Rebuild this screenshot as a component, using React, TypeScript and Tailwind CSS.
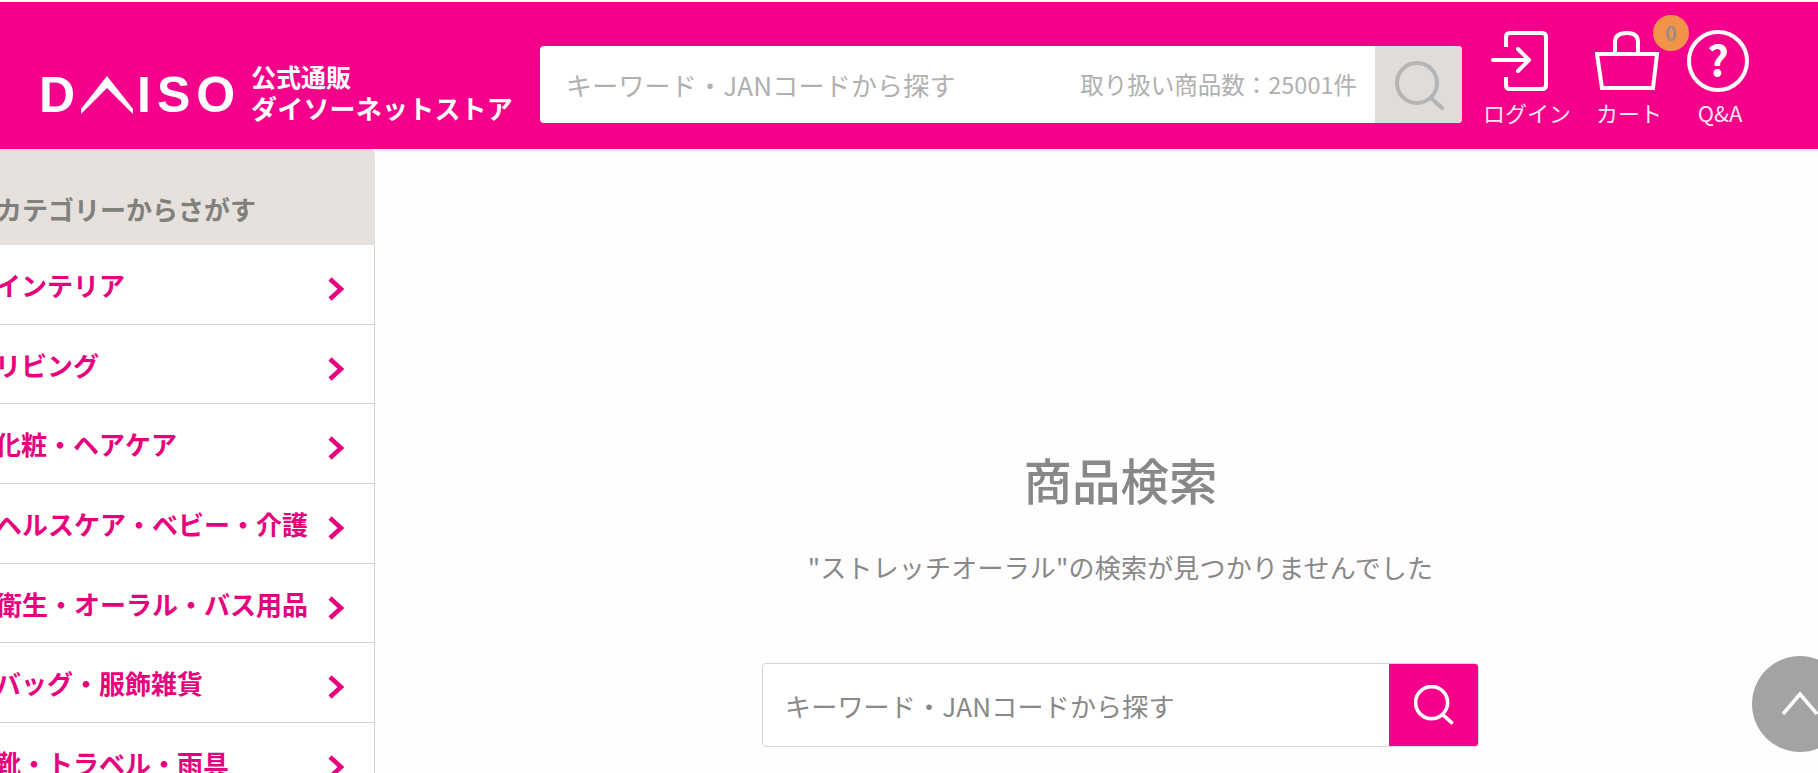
const font = { fontFamily: '"Noto Sans CJK JP", "Noto Sans", sans-serif' };

const cats = [
  { t: 'インテリア', ml: '-ml-[5px]' },
  { t: 'リビング', ml: '-ml-[5px]' },
  { t: '化粧・ヘアケア', ml: '-ml-[5px]' },
  { t: 'ヘルスケア・ベビー・介護', ml: '-ml-[4px]' },
  { t: '衛生・オーラル・バス用品', ml: '-ml-[4px]' },
  { t: 'バッグ・服飾雑貨', ml: '-ml-[5px]' },
  { t: '靴・トラベル・雨具', ml: '-ml-[5px]' },
];

function SearchIcon({ className, color, w = 4 }: { className: string; color: string; w?: number }) {
  return (
    <svg viewBox="0 0 50 50" className={className} fill="none" stroke={color} strokeWidth={w} strokeLinecap="round">
      <circle cx="22" cy="22" r="20" />
      <path d="M36 37 L47 47" />
    </svg>
  );
}

function Chevron() {
  return (
    <svg viewBox="0 0 18 24" className="mt-[9px] h-[24px] w-[18px] shrink-0" fill="none" stroke="#e6007e" strokeWidth="4.5">
      <path d="M3 2 L14 12 L3 22" />
    </svg>
  );
}

function HeaderLink({ label, children }: { label: string; children: React.ReactNode }) {
  return (
    <div className="flex w-[86px] shrink-0 flex-col items-center">
      <div className="flex h-[62px] items-center justify-center">{children}</div>
      <div className="mt-[5px] whitespace-nowrap text-[22px] leading-[30px] text-[#ffe6f3]">{label}</div>
    </div>
  );
}

export default function App() {
  return (
    <div className="flex h-[773px] w-[1818px] flex-col overflow-hidden bg-[#fffdfd]" style={font}>
      <div className="h-[2px] shrink-0 bg-white" />
      <header className="flex h-[147px] shrink-0 items-start bg-[#f4008a]">
        <div className="flex w-[540px] shrink-0 items-start pt-[59px] text-white">
          <div className="ml-[39px] mt-[9px] flex w-[212px] shrink-0 items-center text-[50px] font-bold leading-none" style={{ fontFamily: '"Liberation Sans", sans-serif' }}>
            <span className="inline-block w-[37px]">D</span>
            <svg viewBox="0 0 52 38" className="ml-[5px] h-[38px] w-[52px]" fill="white">
              <path d="M0 33 L26 0 L52 33 L52 38 L26 12 L0 38 Z" />
            </svg>
            <span className="ml-[4px] tracking-[6px]">ISO</span>
          </div>
          <div className="flex flex-col font-bold">
            <span className="text-[25px] leading-[31px]">公式通販</span>
            <span className="whitespace-nowrap text-[26px] leading-[32px] tracking-[0.2px]">ダイソーネットストア</span>
          </div>
        </div>
        <div className="mt-[44px] flex h-[77px] w-[922px] shrink-0 items-center overflow-hidden rounded-[4px] bg-white">
          <div className="flex-1 pl-[26px] text-[26px] tracking-[0.2px] text-[#b0b0b0]">キーワード・JANコードから探す</div>
          <div className="pr-[18px] text-[23.5px] text-[#b0b0b0]">取り扱い商品数：25001件</div>
          <div className="flex h-full w-[87px] items-center justify-center bg-[#dfdcda]">
            <SearchIcon className="ml-[2px] mt-[2px] h-[50px] w-[50px]" color="#b5b5b5" />
          </div>
        </div>
        <div className="ml-[22px] mt-[28px] flex items-start">
          <HeaderLink label="ログイン">
            <svg viewBox="0 0 57 60" className="-ml-[15px] h-[60px] w-[57px] shrink-0" fill="none" stroke="white" strokeWidth="4">
              <path d="M15 16 V6 Q15 2 19 2 H51 Q55 2 55 6 V54 Q55 58 51 58 H19 Q15 58 15 54 V46" />
              <path d="M2 29 H37 M27 18 L38 29 L27 40" strokeLinecap="round" strokeLinejoin="round" />
            </svg>
          </HeaderLink>
          <div className="relative ml-[16px]">
            <HeaderLink label="カート">
              <svg viewBox="0 0 64 60" className="-ml-[5px] h-[60px] w-[64px] shrink-0" fill="none" stroke="white" strokeWidth="4">
                <path d="M2 23 H62 L58 57 H7 Z" />
                <path d="M20 23 V11 Q20 2 32 2 Q43 2 43 11 V23" />
              </svg>
            </HeaderLink>
            <div className="absolute left-[67px] -top-[15px] flex h-[36px] w-[36px] items-center justify-center rounded-full bg-[#f3934a] text-[20px] font-bold text-[#9a8f85]">0</div>
          </div>
          <div className="ml-[5px]">
            <HeaderLink label="Q&A">
              <svg viewBox="0 0 62 62" className="-ml-[5px] h-[62px] w-[62px] shrink-0" fill="none" stroke="white" strokeWidth="4">
                <circle cx="31" cy="31" r="29" />
                <text x="31" y="46" textAnchor="middle" fontSize="42" fontWeight="700" fill="white" stroke="none" style={font}>?</text>
              </svg>
            </HeaderLink>
          </div>
        </div>
      </header>
      <div className="flex min-h-0 flex-1">
        <aside className="w-[375px] shrink-0">
          <div className="flex h-[96px] items-center rounded-tr-[6px] bg-[#e6e1dd] pt-[22px] text-[26px] font-bold text-[#80807c]">
            <span className="-ml-[4px] whitespace-nowrap">カテゴリーからさがす</span>
          </div>
          {cats.map((c) => (
            <div key={c.t} className="flex h-[79.7px] items-center justify-between border-r border-b border-[#d2d2d2] bg-white pr-[29px]">
              <span className={`${c.ml} whitespace-nowrap text-[26px] font-bold text-[#e6007e]`}>{c.t}</span>
              <Chevron />
            </div>
          ))}
        </aside>
        <main className="relative min-w-0 flex-1">
          <div className="ml-[387px] flex w-[717px] flex-col items-center pt-[295px]">
            <h1 className="whitespace-nowrap text-[48.5px] font-medium leading-[70px] text-[#888888]">商品検索</h1>
            <p className="mt-[33px] whitespace-nowrap text-[26px] leading-[40px] tracking-[0.2px] text-[#888888]">"ストレッチオーラル"の検索が見つかりませんでした</p>
            <div className="mt-[76px] flex h-[84px] w-full overflow-hidden rounded-[4px] border border-[#d5d5d5] bg-white">
              <div className="flex flex-1 items-center pl-[22px] text-[26px] tracking-[0.2px] text-[#888888]">キーワード・JANコードから探す</div>
              <div className="-my-px -mr-px flex w-[90px] items-center justify-center bg-[#f4008a]">
                <SearchIcon className="h-[40px] w-[40px]" color="white" w={4.5} />
              </div>
            </div>
          </div>
          <div className="absolute left-[1377px] top-[507px] flex h-[96px] w-[96px] items-center justify-center rounded-full bg-[#a3a3a3]">
            <svg viewBox="0 0 40 24" className="h-[24px] w-[40px]" fill="none" stroke="white" strokeWidth="3.5">
              <path d="M3 22 L20 2 L37 22" />
            </svg>
          </div>
        </main>
      </div>
    </div>
  );
}
